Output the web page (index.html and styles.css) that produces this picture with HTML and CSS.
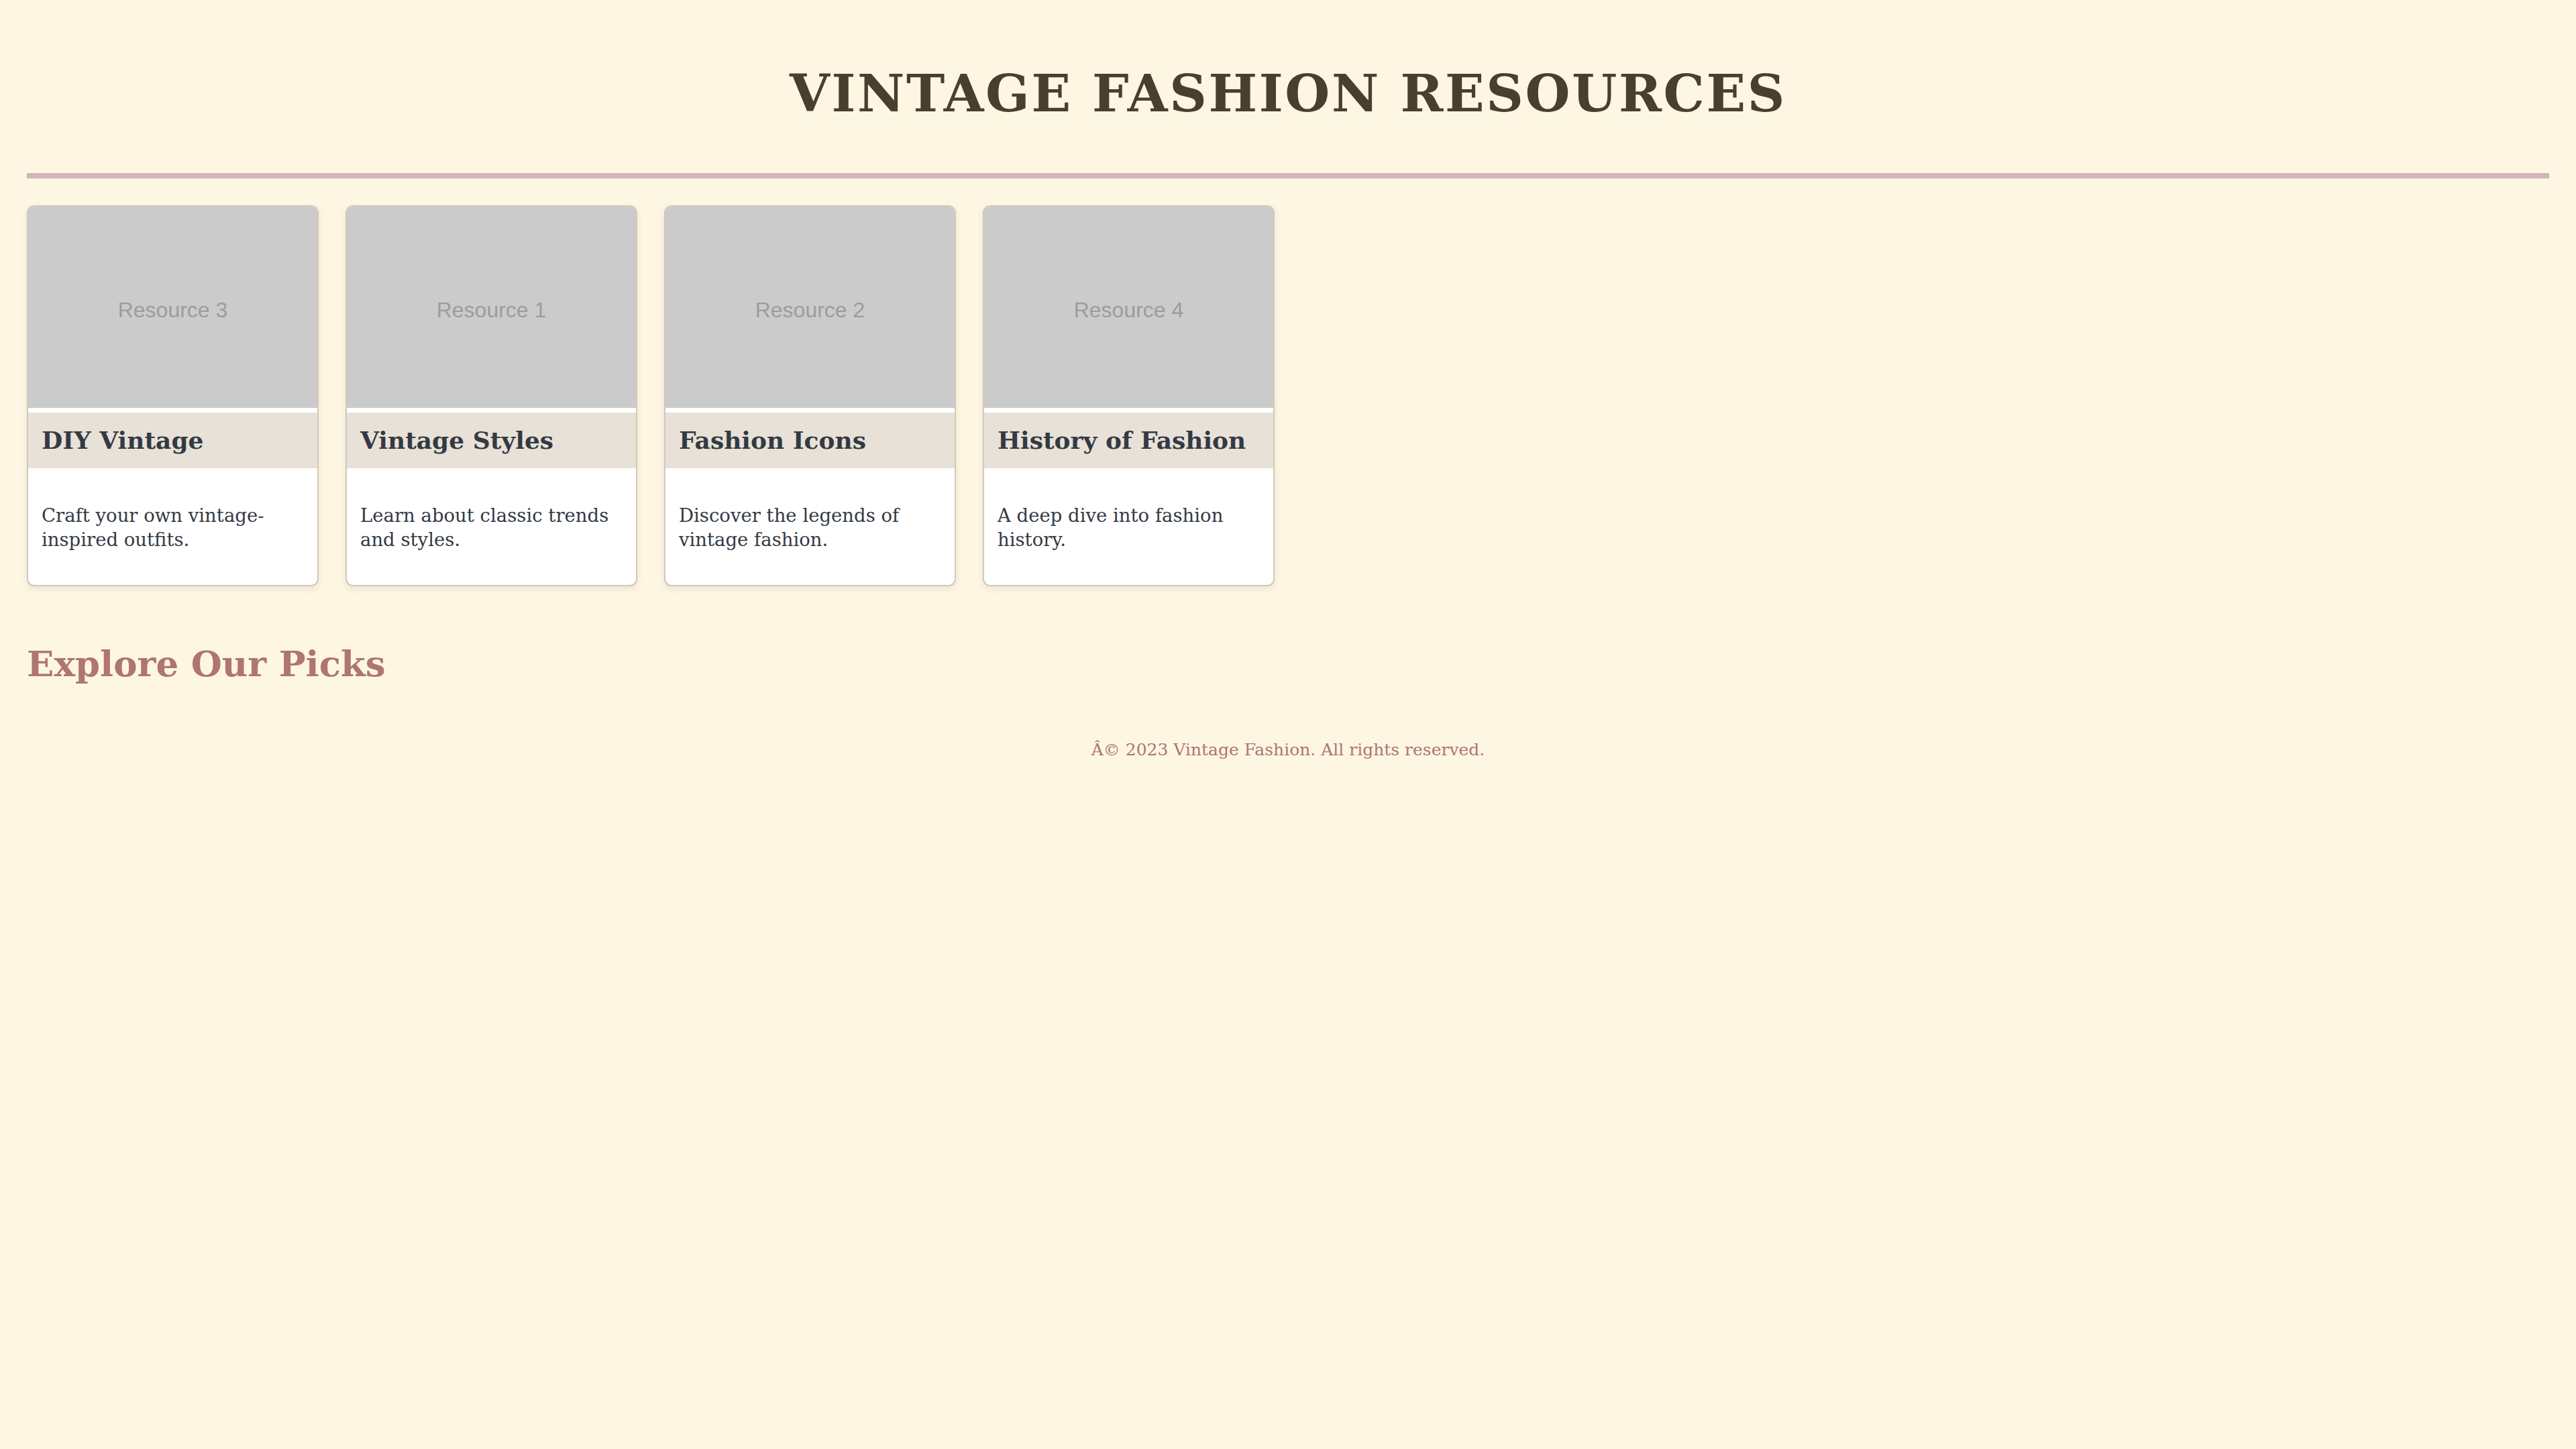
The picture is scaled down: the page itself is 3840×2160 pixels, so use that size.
FILE: index.html
```html
<!DOCTYPE html>
<html lang="en">
<head>
<meta charset="utf-8">
<title>Vintage Fashion Resources</title>
<link rel="stylesheet" href="styles.css">
</head>
<body>
<div class="page">
  <header class="site-header">
    <h1 class="site-title">Vintage Fashion Resources</h1>
  </header>
  <main>
    <section class="cards">
      <article class="card">
        <div class="card-image"><span>Resource 3</span></div>
        <h3 class="card-title">DIY Vintage</h3>
        <div class="card-body"><p>Craft your own vintage-inspired outfits.</p></div>
      </article>
      <article class="card">
        <div class="card-image"><span>Resource 1</span></div>
        <h3 class="card-title">Vintage Styles</h3>
        <div class="card-body"><p>Learn about classic trends and styles.</p></div>
      </article>
      <article class="card">
        <div class="card-image"><span>Resource 2</span></div>
        <h3 class="card-title">Fashion Icons</h3>
        <div class="card-body"><p>Discover the legends of vintage fashion.</p></div>
      </article>
      <article class="card">
        <div class="card-image"><span>Resource 4</span></div>
        <h3 class="card-title">History of Fashion</h3>
        <div class="card-body"><p>A deep dive into fashion history.</p></div>
      </article>
    </section>
    <h2 class="picks-title">Explore Our Picks</h2>
  </main>
  <footer class="site-footer">
    <p>Â© 2023 Vintage Fashion. All rights reserved.</p>
  </footer>
</div>
</body>
</html>
```

FILE: styles.css
```css
html, body {
  margin: 0;
  padding: 0;
  background: #fdf6e3;
}

body {
  font-family: Georgia, "DejaVu Serif", serif;
  color: #333a44;
  min-height: 2160px;
}

.page {
  padding: 0 40px 40px;
}

.site-header {
  padding-bottom: 20px;
  border-bottom: 8px solid #d5b3bf;
  text-align: center;
}

.site-title {
  margin: 0;
  padding-top: 94px;
  padding-bottom: 53px;
  font-family: "DejaVu Serif", serif;
  font-weight: bold;
  font-size: 77px;
  line-height: 91px;
  letter-spacing: 2.6px;
  text-transform: uppercase;
  color: #4a3f2e;
}

.cards {
  margin-top: 40px;
  display: grid;
  grid-template-columns: repeat(auto-fill, minmax(400px, 1fr));
  gap: 40px;
}

.card {
  background: #ffffff;
  border: 2px solid #d3c7bc;
  border-radius: 11px;
  overflow: hidden;
  box-shadow: 0 4px 10px rgba(120, 100, 80, 0.12);
}

.card-image {
  height: 300px;
  margin-bottom: 7px;
  padding-top: 8px;
  box-sizing: border-box;
  background: #cbcbcb;
  display: flex;
  align-items: center;
  justify-content: center;
}

.card-image span {
  font-family: "Liberation Sans", Arial, sans-serif;
  font-size: 32px;
  color: #9c9c9c;
}

.card-title {
  margin: 0;
  padding: 0 20px;
  background: #e8e1d7;
  font-family: "DejaVu Serif", serif;
  font-weight: bold;
  font-size: 36px;
  line-height: 83px;
  color: #333a44;
}

.card-body {
  padding: 0 20px;
}

.card-body p {
  margin: 52px 0 50px;
  font-family: "DejaVu Serif", serif;
  font-size: 27.5px;
  line-height: 36px;
  color: #333a44;
}

.picks-title {
  margin: 82px 0 0;
  font-family: "DejaVu Serif", serif;
  font-weight: bold;
  font-size: 53px;
  line-height: 66px;
  color: #b07570;
}

.site-footer {
  text-align: center;
}

.site-footer p {
  margin: 79px 0 0;
  font-family: "DejaVu Serif", serif;
  font-size: 25px;
  line-height: 34px;
  color: #b07570;
}
```
